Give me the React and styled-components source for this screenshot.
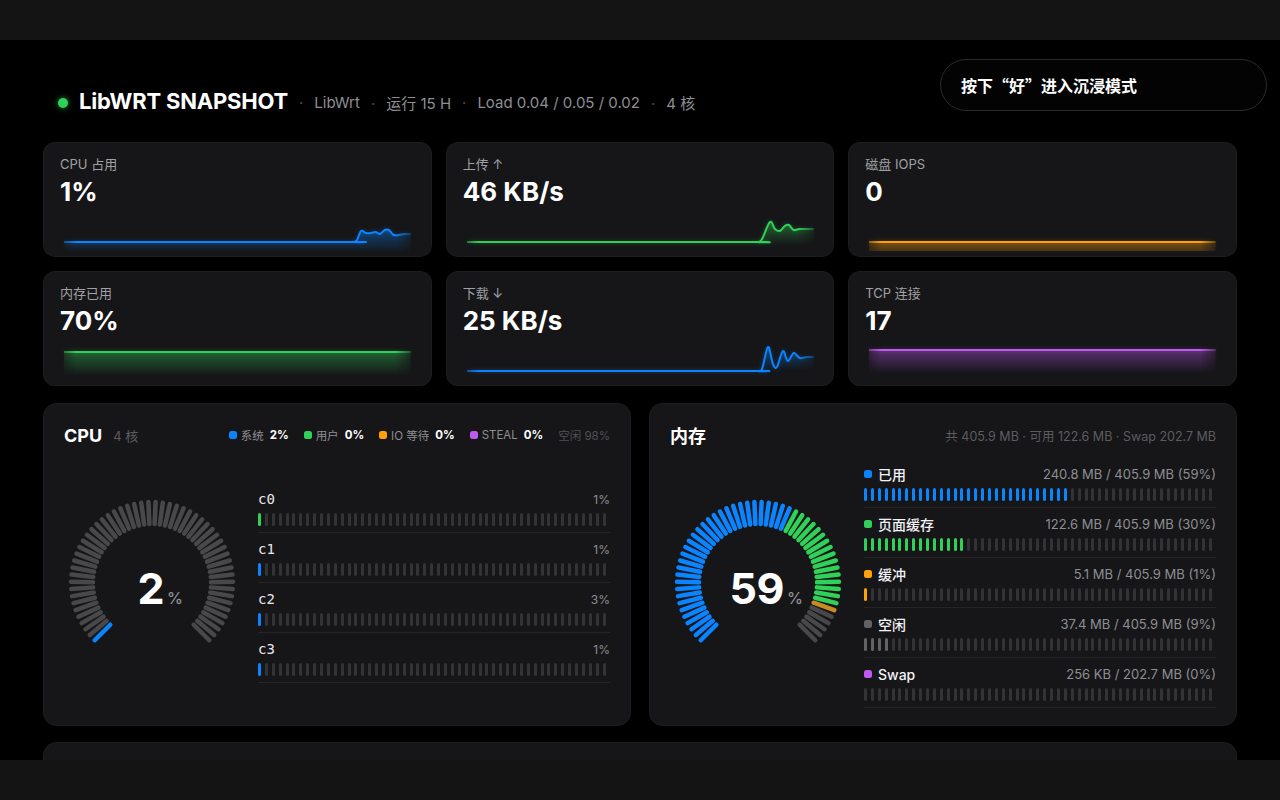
import styled, { createGlobalStyle } from "styled-components";

const C = {
  blue: "#0a84ff",
  green: "#30d158",
  orange: "#ff9f0a",
  purple: "#bf5af2",
  grey: "#8e8e93",
  dim: "#5c5c60",
  tick: "#333336",
  gaugeTick: "#48484b",
};

const SANS = `Inter, "Noto Sans CJK SC", sans-serif`;

const GlobalStyle = createGlobalStyle`
  html, body {
    margin: 0;
    background: #141414;
    overflow: hidden;
  }
  body {
    font-family: ${SANS};
    color: #fff;
  }
`;

const Screen = styled.div`
  position: relative;
  height: 720px;
  margin: 40px 0;
  padding: 0 43px;
  box-sizing: border-box;
  background: #000;
  overflow: hidden;
`;

const Header = styled.div`
  display: flex;
  align-items: center;
  height: 22px;
  margin: 50px 0 30px;
  padding-left: 15px;
`;

const LiveDot = styled.span`
  width: 10px;
  height: 10px;
  border-radius: 50%;
  background: ${C.green};
  box-shadow: 0 0 6px rgba(48, 209, 88, 0.7);
  margin-right: 11px;
  margin-top: 3px;
`;

const Title = styled.h1`
  margin: 0;
  font-size: 22px;
  font-weight: 700;
  letter-spacing: -0.2px;
`;

const Meta = styled.span`
  font-size: 15px;
  color: ${C.grey};
  margin-top: 3px;
  &::before {
    content: "·";
    color: #4a4a4e;
    margin: 0 11px;
  }
`;

const HintPill = styled.div`
  position: absolute;
  top: 19px;
  right: 13px;
  width: 327px;
  height: 52px;
  box-sizing: border-box;
  display: flex;
  align-items: center;
  padding-left: 20px;
  border: 1px solid #2a2a2d;
  border-radius: 26px;
  background: #030303;
  font-family: "Noto Sans CJK SC", sans-serif;
  font-size: 16px;
  font-weight: 600;
`;

const StatGrid = styled.div`
  display: grid;
  grid-template-columns: repeat(3, minmax(0, 1fr));
  gap: 14px;
`;

const StatCard = styled.div`
  height: 115px;
  box-sizing: border-box;
  display: flex;
  flex-direction: column;
  padding: 13px 16px 5px;
  border-radius: 12px;
  background: #161618;
  border: 1px solid rgba(255, 255, 255, 0.03);
`;

const StatLabel = styled.div`
  font-size: 13px;
  line-height: 16px;
  color: #a0a0a5;
`;

const StatValue = styled.div`
  margin-top: 5px;
  font-size: 26px;
  line-height: 30px;
  font-weight: 700;
`;

const SparkSvg = styled.svg`
  display: block;
  width: calc(100% - 8px);
  height: 40px;
  margin: auto 4px 0;
  overflow: visible;
  filter: drop-shadow(0 0 2px ${(p) => p.$glow});
`;

const PanelRow = styled.div`
  display: grid;
  grid-template-columns: minmax(0, 1fr) minmax(0, 1fr);
  gap: 18px;
  margin-top: 17px;
`;

const Panel = styled.section`
  height: ${(p) => p.$height || 323}px;
  box-sizing: border-box;
  padding: 20px 20px 19px;
  border-radius: 14px;
  background: #161618;
  border: 1px solid rgba(255, 255, 255, 0.03);
`;

const BottomPanel = styled(Panel)`
  margin-top: 16px;
`;

const PanelHead = styled.div`
  display: flex;
  align-items: center;
  height: 22px;
`;

const PanelTitle = styled.h2`
  margin: 0;
  font-size: 18px;
  font-weight: 700;
`;

const PanelSub = styled.span`
  margin-left: 11px;
  font-size: 13px;
  color: ${C.dim};
`;

const HeadRight = styled.div`
  margin-left: auto;
  display: flex;
  align-items: center;
  gap: 15px;
  font-size: ${(p) => (p.$dim ? 12.5 : 11.5)}px;
  color: ${(p) => (p.$dim ? C.dim : C.grey)};
`;

const LegendItem = styled.span`
  display: flex;
  align-items: center;
  gap: 4px;
  color: ${(p) => (p.$dim ? "#505055" : C.grey)};
  & b {
    color: #fff;
    font-weight: 700;
    margin-left: 2px;
  }
`;

const Swatch = styled.i`
  width: 8px;
  height: 8px;
  border-radius: 2.5px;
  background: ${(p) => p.$color};
`;

const PanelBody = styled.div`
  display: flex;
  align-items: center;
  height: 250px;
  margin-top: 12px;
`;

const GaugeWrap = styled.div`
  display: grid;
  flex: none;
  width: 176px;
  height: 176px;
  margin-right: 18px;
  & > * {
    grid-area: 1 / 1;
  }
`;

const Readout = styled.div`
  align-self: center;
  justify-self: center;
  margin-top: 10px;
  padding-left: 16px;
  display: flex;
  align-items: baseline;
  font-size: 43px;
  font-weight: 700;
  letter-spacing: -0.5px;
  & small {
    margin-left: 3px;
    font-size: 16px;
    font-weight: 500;
    color: ${C.grey};
  }
`;

const RowList = styled.div`
  flex: 1;
  min-width: 0;
`;

const MeterRow = styled.div`
  padding: 7px 0 6px;
  border-bottom: 1px solid #242427;
`;

const RowHead = styled.div`
  display: flex;
  align-items: center;
  justify-content: space-between;
  height: 18px;
  margin-bottom: 5px;
`;

const CoreName = styled.span`
  font-family: "DejaVu Sans Mono", monospace;
  font-size: 14px;
  color: #e8e8ed;
`;

const RowLabel = styled.span`
  display: flex;
  align-items: center;
  gap: 6px;
  font-size: 14px;
  font-weight: 500;
  color: #f2f2f7;
`;

const RowValue = styled.span`
  font-size: ${(p) => (p.$small ? 12 : 13)}px;
  color: ${C.grey};
`;

const TickBar = styled.div`
  display: flex;
  justify-content: space-between;
  height: 13px;
  margin-right: 4px;
`;

const Tick = styled.span`
  width: 3px;
  height: 100%;
  border-radius: 1.5px;
  background: ${(p) => p.$color};
`;

function smooth(pts) {
  let d = `M${pts[0][0]},${pts[0][1]}`;
  for (let i = 0; i < pts.length - 1; i++) {
    const p0 = pts[i - 1] || pts[i];
    const p1 = pts[i];
    const p2 = pts[i + 1];
    const p3 = pts[i + 2] || p2;
    const c1 = [p1[0] + (p2[0] - p0[0]) / 6, p1[1] + (p2[1] - p0[1]) / 6];
    const c2 = [p2[0] - (p3[0] - p1[0]) / 6, p2[1] - (p3[1] - p1[1]) / 6];
    d += ` C${c1[0].toFixed(1)},${c1[1].toFixed(1)} ${c2[0].toFixed(1)},${c2[1].toFixed(1)} ${p2[0]},${p2[1]}`;
  }
  return d;
}

const W = 349;

function Sparkline({ id, color, points }) {
  const line = smooth(points);
  const area = `${line} L${W},40 L0,40 Z`;
  const top = Math.min(...points.map((p) => p[1]));
  return (
    <SparkSvg viewBox={`0 0 ${W} 40`} preserveAspectRatio="none" $glow={`${color}55`}>
      <defs>
        <linearGradient id={`fill-${id}`} gradientUnits="userSpaceOnUse" x1="0" y1={top} x2="0" y2={top + 24}>
          <stop offset="0" stopColor={color} stopOpacity="0.32" />
          <stop offset="1" stopColor={color} stopOpacity="0" />
        </linearGradient>
        <linearGradient id={`fade-${id}`} x1="0" y1="0" x2="1" y2="0">
          <stop offset="0" stopColor="#fff" stopOpacity="0.25" />
          <stop offset="0.05" stopColor="#fff" stopOpacity="1" />
          <stop offset="0.94" stopColor="#fff" stopOpacity="1" />
          <stop offset="1" stopColor="#fff" stopOpacity="0.1" />
        </linearGradient>
        <mask id={`mask-${id}`} maskUnits="userSpaceOnUse" x="-6" y="-10" width={W + 12} height="60">
          <rect x="-6" y="-10" width={W + 12} height="60" fill={`url(#fade-${id})`} />
        </mask>
      </defs>
      <g mask={`url(#mask-${id})`}>
        <path d={area} fill={`url(#fill-${id})`} />
        <path d={line} fill="none" stroke={color} strokeWidth="2" strokeLinejoin="round" />
      </g>
    </SparkSvg>
  );
}

const flat = (y) => [
  [0, y],
  [W, y],
];

const stats = [
  {
    id: "cpu",
    label: "CPU 占用",
    value: "1%",
    color: C.blue,
    points: [[0, 31], [280, 31], [291, 31], [295, 29], [299, 20], [304, 22], [309, 22], [314, 21], [318, 23], [323, 19], [327, 19], [332, 24], [337, 24], [343, 23], [349, 23]],
  },
  {
    id: "up",
    label: "上传 ↑",
    value: "46 KB/s",
    color: C.green,
    points: [[0, 31], [280, 31], [293, 31], [297, 28], [305, 11], [310, 18], [315, 20], [320, 15], [324, 14], [329, 19], [335, 18], [349, 18]],
  },
  { id: "disk", label: "磁盘 IOPS", value: "0", color: C.orange, points: flat(31) },
  { id: "mem", label: "内存已用", value: "70%", color: C.green, points: flat(12) },
  {
    id: "down",
    label: "下载 ↓",
    value: "25 KB/s",
    color: C.blue,
    points: [[0, 31], [280, 31], [292, 31], [297, 29], [303, 7], [308, 24], [312, 27], [318, 11], [323, 21], [329, 13], [335, 18], [342, 17], [349, 17]],
  },
  { id: "tcp", label: "TCP 连接", value: "17", color: C.purple, points: flat(10) },
];

const cpuLegend = [
  { color: C.blue, label: "系统", value: "2%" },
  { color: C.green, label: "用户", value: "0%" },
  { color: C.orange, label: "IO 等待", value: "0%" },
  { color: C.purple, label: "STEAL", value: "0%" },
];

const cores = [
  { name: "c0", pct: 1, color: C.green },
  { name: "c1", pct: 1, color: C.blue },
  { name: "c2", pct: 3, color: C.blue },
  { name: "c3", pct: 1, color: C.blue },
];

const memRows = [
  { label: "已用", color: C.blue, pct: 59, value: "240.8 MB / 405.9 MB (59%)" },
  { label: "页面缓存", color: C.green, pct: 30, value: "122.6 MB / 405.9 MB (30%)" },
  { label: "缓冲", color: C.orange, pct: 1, value: "5.1 MB / 405.9 MB (1%)" },
  { label: "空闲", color: "#636366", pct: 9, value: "37.4 MB / 405.9 MB (9%)" },
  { label: "Swap", color: C.purple, pct: 0, value: "256 KB / 202.7 MB (0%)" },
];

const BAR_TICKS = 51;

function Bar({ pct, color }) {
  const lit = pct > 0 ? Math.max(1, Math.floor((pct / 100) * BAR_TICKS)) : 0;
  return (
    <TickBar>
      {Array.from({ length: BAR_TICKS }, (_, i) => (
        <Tick key={i} $color={i < lit ? color : C.tick} />
      ))}
    </TickBar>
  );
}

function Gauge({ segments, value }) {
  const N = 54;
  const c = 88;
  let acc = 0;
  const stops = segments.map((s) => {
    acc += s.pct / 100;
    return { end: acc, color: s.color };
  });
  const ticks = Array.from({ length: N }, (_, i) => {
    const a = ((-135 + (270 * i) / (N - 1)) * Math.PI) / 180;
    const f = (i + 0.5) / N;
    const hit = stops.find((s) => f < s.end);
    return {
      x1: c + Math.sin(a) * 59,
      y1: c - Math.cos(a) * 59,
      x2: c + Math.sin(a) * 81,
      y2: c - Math.cos(a) * 81,
      color: hit ? hit.color : C.gaugeTick,
    };
  });
  return (
    <GaugeWrap>
      <svg width="176" height="176" viewBox="0 0 176 176">
        {ticks.map((t, i) => (
          <line
            key={i}
            x1={t.x1.toFixed(2)}
            y1={t.y1.toFixed(2)}
            x2={t.x2.toFixed(2)}
            y2={t.y2.toFixed(2)}
            stroke={t.color}
            strokeWidth="4.5"
            strokeLinecap="round"
          />
        ))}
      </svg>
      <Readout>
        {value}
        <small>%</small>
      </Readout>
    </GaugeWrap>
  );
}

export default function App() {
  return (
    <>
      <GlobalStyle />
      <Screen>
        <Header>
          <LiveDot />
          <Title>LibWRT SNAPSHOT</Title>
          <Meta>LibWrt</Meta>
          <Meta>运行 15 H</Meta>
          <Meta>Load 0.04 / 0.05 / 0.02</Meta>
          <Meta>4 核</Meta>
        </Header>

        <HintPill>按下“好”进入沉浸模式</HintPill>

        <StatGrid>
          {stats.map((s) => (
            <StatCard key={s.id}>
              <StatLabel>{s.label}</StatLabel>
              <StatValue>{s.value}</StatValue>
              <Sparkline id={s.id} color={s.color} points={s.points} />
            </StatCard>
          ))}
        </StatGrid>

        <PanelRow>
          <Panel>
            <PanelHead>
              <PanelTitle>CPU</PanelTitle>
              <PanelSub>4 核</PanelSub>
              <HeadRight>
                {cpuLegend.map((l) => (
                  <LegendItem key={l.label}>
                    <Swatch $color={l.color} />
                    {l.label}
                    <b>{l.value}</b>
                  </LegendItem>
                ))}
                <LegendItem $dim>空闲 98%</LegendItem>
              </HeadRight>
            </PanelHead>
            <PanelBody>
              <Gauge value="2" segments={[{ pct: 2, color: C.blue }]} />
              <RowList>
                {cores.map((core) => (
                  <MeterRow key={core.name}>
                    <RowHead>
                      <CoreName>{core.name}</CoreName>
                      <RowValue $small>{core.pct}%</RowValue>
                    </RowHead>
                    <Bar pct={core.pct} color={core.color} />
                  </MeterRow>
                ))}
              </RowList>
            </PanelBody>
          </Panel>

          <Panel>
            <PanelHead>
              <PanelTitle>内存</PanelTitle>
              <HeadRight $dim>共 405.9 MB · 可用 122.6 MB · Swap 202.7 MB</HeadRight>
            </PanelHead>
            <PanelBody>
              <Gauge
                value="59"
                segments={[
                  { pct: 59, color: C.blue },
                  { pct: 30, color: C.green },
                  { pct: 1, color: "#c98a22" },
                ]}
              />
              <RowList>
                {memRows.map((r) => (
                  <MeterRow key={r.label}>
                    <RowHead>
                      <RowLabel>
                        <Swatch $color={r.color} />
                        {r.label}
                      </RowLabel>
                      <RowValue>{r.value}</RowValue>
                    </RowHead>
                    <Bar pct={r.pct} color={r.color} />
                  </MeterRow>
                ))}
              </RowList>
            </PanelBody>
          </Panel>
        </PanelRow>

        <BottomPanel $height={200} />
      </Screen>
    </>
  );
}
